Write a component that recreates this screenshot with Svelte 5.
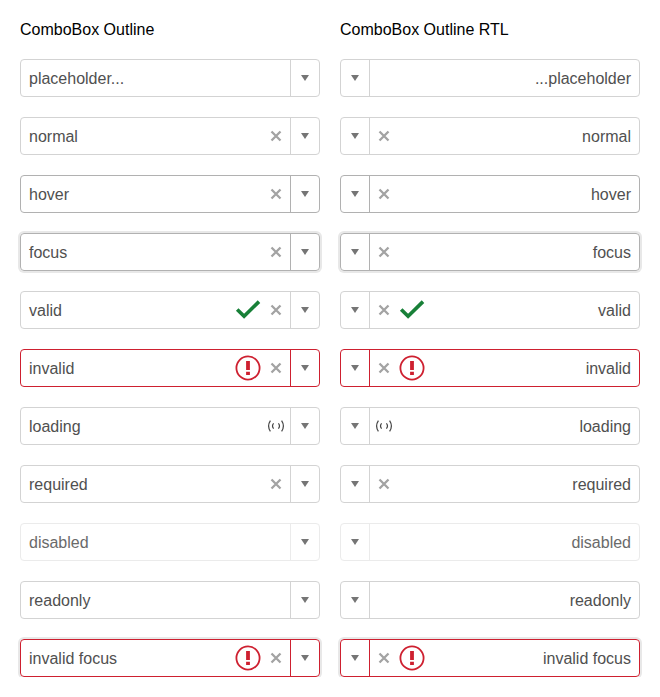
<script>
  const rows = [
    { label: 'placeholder...' },
    { label: 'normal', clear: true },
    { label: 'hover', clear: true, state: 'hover' },
    { label: 'focus', clear: true, state: 'hover focus' },
    { label: 'valid', clear: true, status: 'valid' },
    { label: 'invalid', clear: true, status: 'invalid', state: 'invalid' },
    { label: 'loading', loading: true },
    { label: 'required', clear: true },
    { label: 'disabled', state: 'disabled' },
    { label: 'readonly' },
    { label: 'invalid focus', clear: true, status: 'invalid', state: 'invalid focus' }
  ];
  const columns = [
    { title: 'ComboBox Outline', dir: 'ltr' },
    { title: 'ComboBox Outline RTL', dir: 'rtl' }
  ];
</script>

<main>
  {#each columns as column}
    <section>
      <h2>{column.title}</h2>
      {#each rows as row}
        <div class="combo {row.state ?? ''}" dir={column.dir}>
          <span class="value">{row.label}</span>
          {#if row.status === 'valid'}
            <span class="slot">
              <svg width="28" height="28" viewBox="0 0 28 28">
                <path d="M3.2 13.4 L10.1 20.3 L25 5.6" fill="none" stroke="#188038" stroke-width="3.6" />
              </svg>
            </span>
          {:else if row.status === 'invalid'}
            <span class="slot">
              <svg width="28" height="28" viewBox="0 0 28 28">
                <circle cx="14" cy="14" r="11.6" fill="none" stroke="#ce2030" stroke-width="1.8" />
                <path d="M12.1 7H15.9V16H12.1Z M12.1 17.7H15.9V21H12.1Z" fill="#ce2030" />
              </svg>
            </span>
          {/if}
          {#if row.clear}
            <span class="slot">
              <svg width="12" height="12" viewBox="0 0 12 12">
                <path d="M1.5 1.5 L10.5 10.5 M10.5 1.5 L1.5 10.5" fill="none" stroke="#a3a3a3" stroke-width="2.3" />
              </svg>
            </span>
          {/if}
          {#if row.loading}
            <span class="slot">
              <svg width="18" height="14" viewBox="0 0 18 14">
                <path d="M3.4 1.6 Q-0.2 7 3.4 12.4 M14.6 1.6 Q18.2 7 14.6 12.4 M6.6 4.4 Q4.4 7 6.6 9.6 M11.4 4.4 Q13.6 7 11.4 9.6" fill="none" stroke="#454545" stroke-width="1.2" />
              </svg>
            </span>
          {/if}
          <span class="toggle">
            <svg width="8" height="6" viewBox="0 0 8 6">
              <path d="M0 0H8L4 6Z" fill="#757575" />
            </svg>
          </span>
        </div>
      {/each}
    </section>
  {/each}
</main>

<style>
  :global(body) {
    background: #fff;
  }
  main {
    display: flex;
    gap: 20px;
    padding: 20px 20px 0;
    font: 16px/18px 'Liberation Sans', Arial, sans-serif;
  }
  section {
    display: flex;
    flex-direction: column;
    gap: 20px;
    width: 300px;
  }
  h2 {
    margin: 0;
    padding-top: 1px;
    font-size: 16px;
    font-weight: 400;
    line-height: 18px;
    color: #000;
  }
  .combo {
    --edge: #d3d3d3;
    box-sizing: border-box;
    display: flex;
    align-items: stretch;
    height: 38px;
    border: 1px solid var(--edge);
    border-radius: 4px;
    color: #505050;
  }
  .value {
    flex: 1;
    align-self: center;
    padding: 2px 8px 0;
  }
  .slot,
  .toggle {
    display: flex;
    align-items: center;
    justify-content: center;
    width: 28px;
  }
  .toggle {
    border-inline-start: 1px solid var(--edge);
  }
  .hover {
    --edge: #b1b1b1;
  }
  .focus {
    box-shadow: 0 0 0 2px #e8e8e8;
  }
  .invalid {
    --edge: #ce2030;
  }
  .disabled {
    --edge: #ebebeb;
    color: #6a6a6a;
  }
  svg {
    display: block;
  }
</style>
